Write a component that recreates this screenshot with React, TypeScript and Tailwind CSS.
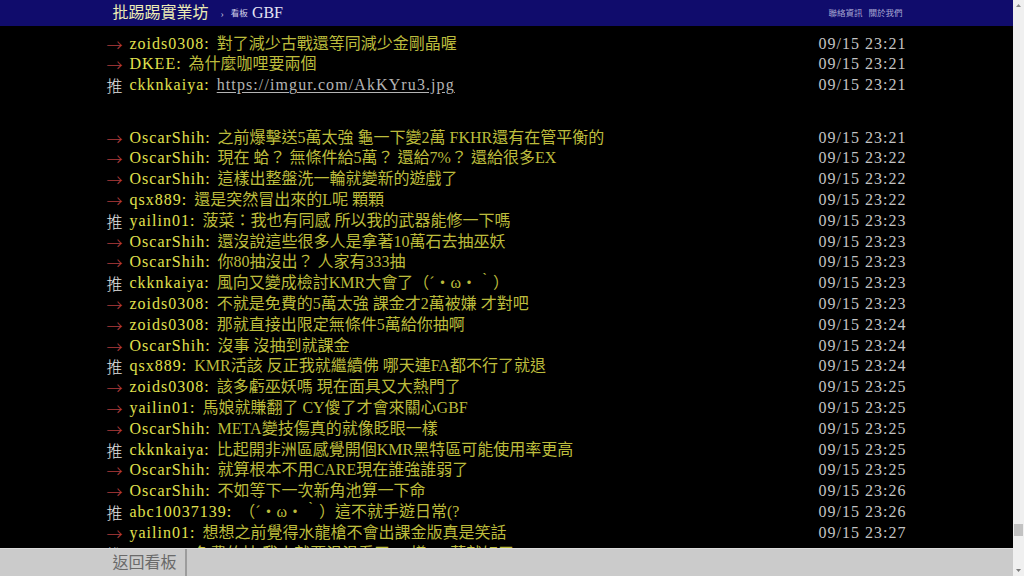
import React from 'react';

type Push = {
  tag: '推' | '→';
  user: string;
  text: string;
  time: string;
  link?: boolean;
};

const top: Push[] = [
  { tag: '→', user: 'zoids0308', text: '對了減少古戰還等同減少金剛晶喔', time: '09/15 23:21' },
  { tag: '→', user: 'DKEE', text: '為什麼咖哩要兩個', time: '09/15 23:21' },
  { tag: '推', user: 'ckknkaiya', text: 'https://imgur.com/AkKYru3.jpg', time: '09/15 23:21', link: true },
];

const rest: Push[] = [
  { tag: '→', user: 'OscarShih', text: '之前爆擊送5萬太強 龜一下變2萬 FKHR還有在管平衡的', time: '09/15 23:21' },
  { tag: '→', user: 'OscarShih', text: '現在 蛤？ 無條件給5萬？ 還給7%？ 還給很多EX', time: '09/15 23:22' },
  { tag: '→', user: 'OscarShih', text: '這樣出整盤洗一輪就變新的遊戲了', time: '09/15 23:22' },
  { tag: '→', user: 'qsx889', text: '還是突然冒出來的L呢 顆顆', time: '09/15 23:22' },
  { tag: '推', user: 'yailin01', text: '菠菜：我也有同感 所以我的武器能修一下嗎', time: '09/15 23:23' },
  { tag: '→', user: 'OscarShih', text: '還沒說這些很多人是拿著10萬石去抽巫妖', time: '09/15 23:23' },
  { tag: '→', user: 'OscarShih', text: '你80抽沒出？ 人家有333抽', time: '09/15 23:23' },
  { tag: '推', user: 'ckknkaiya', text: '風向又變成檢討KMR大會了（´・ω・｀）', time: '09/15 23:23' },
  { tag: '→', user: 'zoids0308', text: '不就是免費的5萬太強 課金才2萬被嫌 才對吧', time: '09/15 23:23' },
  { tag: '→', user: 'zoids0308', text: '那就直接出限定無條件5萬給你抽啊', time: '09/15 23:24' },
  { tag: '→', user: 'OscarShih', text: '沒事 沒抽到就課金', time: '09/15 23:24' },
  { tag: '推', user: 'qsx889', text: 'KMR活該  反正我就繼續佛 哪天連FA都不行了就退', time: '09/15 23:24' },
  { tag: '→', user: 'zoids0308', text: '該多虧巫妖嗎 現在面具又大熱門了', time: '09/15 23:25' },
  { tag: '→', user: 'yailin01', text: '馬娘就賺翻了 CY傻了才會來關心GBF', time: '09/15 23:25' },
  { tag: '→', user: 'OscarShih', text: 'META變技傷真的就像眨眼一樣', time: '09/15 23:25' },
  { tag: '推', user: 'ckknkaiya', text: '比起開非洲區感覺開個KMR黑特區可能使用率更高', time: '09/15 23:25' },
  { tag: '→', user: 'OscarShih', text: '就算根本不用CARE現在誰強誰弱了', time: '09/15 23:25' },
  { tag: '→', user: 'OscarShih', text: '不如等下一次新角池算一下命', time: '09/15 23:26' },
  { tag: '推', user: 'abc10037139', text: '（´・ω・｀）這不就手遊日常(?', time: '09/15 23:26' },
  { tag: '→', user: 'yailin01', text: '想想之前覺得水龍槍不會出課金版真是笑話', time: '09/15 23:27' },
  { tag: '推', user: 'qsx889', text: '免費的抽 我人就要滑滑看了 一樣333萬就好了', time: '09/15 23:27' },
];

function PushRow({ p }: { p: Push }) {
  return (
    <div className="flex h-[20.8px] items-center whitespace-nowrap">
      <span
        className={`w-[23px] shrink-0 font-['Noto_Sans_CJK_TC',sans-serif] leading-[20.8px] font-light ${
          p.tag === '推' ? 'text-[#e4e4e4]' : 'text-[#b03c3c]'
        }`}
      >
        {p.tag}
      </span>
      <span className="tracking-[1px] text-[#e2e24e]">{p.user}:</span>
      <span className="flex-1 overflow-hidden pl-[7px] text-[#bcbc3c]">
        {p.link ? (
          <span className="tracking-[1.1px] text-[#b4b4b4] underline underline-offset-2">{p.text}</span>
        ) : (
          p.text
        )}
      </span>
      <span className="shrink-0 tracking-[1px] text-[#c4c4c4]">{p.time}</span>
    </div>
  );
}

export default function App() {
  return (
    <div className="flex h-screen w-full overflow-hidden bg-black font-['Liberation_Serif','Noto_Sans_CJK_TC',serif]">
      <div className="flex min-w-0 flex-1 flex-col">
        <div className="h-[26px] shrink-0 bg-[#100c6c]">
          <div className="mx-auto flex h-full w-[800px] items-center pl-[6px] pr-[4px]">
            <span className="text-[16px] text-[#ececb4]">批踢踢實業坊</span>
            <span className="ml-[12px] text-[10px] text-[#b8b8d8]">›</span>
            <span className="ml-[7px] text-[8.5px] text-[#d0d0e8]">看板</span>
            <span className="ml-[4px] text-[16px] text-[#e4e4f4]">GBF</span>
            <div className="ml-auto flex gap-[6px] text-[8.5px] text-[#a8a8d4]">
              <span>聯絡資訊</span>
              <span>關於我們</span>
            </div>
          </div>
        </div>

        <div className="min-h-0 flex-1 overflow-hidden">
          <div className="mx-auto w-[800px] pt-[7.6px] text-[16px] leading-[20.8px]">
            {top.map((p, i) => (
              <PushRow key={'t' + i} p={p} />
            ))}
            <div className="h-[31.6px]" />
            {rest.map((p, i) => (
              <PushRow key={'r' + i} p={p} />
            ))}
          </div>
        </div>

        <div className="h-[28px] shrink-0 border-t border-[#dcdcdc] bg-[#cbcbcb]">
          <div className="mx-auto flex h-full w-[800px]">
            <div className="flex items-center border-r-2 border-[#9c9c9c] pl-[6px] pr-[8px] text-[16px] text-[#6a6a6a]">
              返回看板
            </div>
          </div>
        </div>
      </div>

      <div className="flex w-[11px] shrink-0 flex-col items-center bg-[#f0f0f0]">
        <div className="flex h-[11px] items-center justify-center">
          <svg width="5" height="3" viewBox="0 0 5 3">
            <path d="M2.5 0 L5 3 L0 3 Z" fill="#8a8a8a" />
          </svg>
        </div>
        <div className="flex-1" />
        <div className="h-[12px] w-[9px] bg-[#c2c2c2]" />
        <div className="h-[29px]" />
        <div className="flex h-[11px] items-center justify-center">
          <svg width="5" height="3" viewBox="0 0 5 3">
            <path d="M0 0 L5 0 L2.5 3 Z" fill="#7a7a7a" />
          </svg>
        </div>
      </div>
    </div>
  );
}
